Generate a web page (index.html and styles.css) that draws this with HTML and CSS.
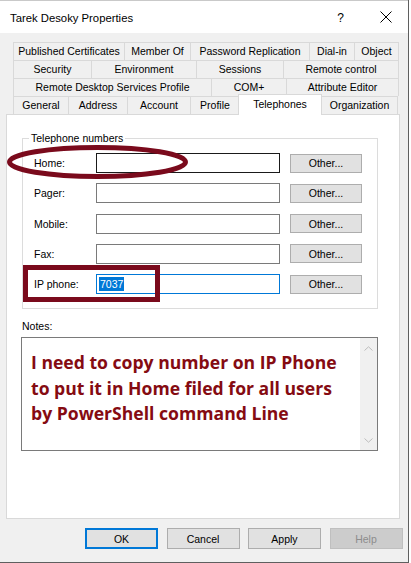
FILE: index.html
```html
<!DOCTYPE html>
<html>
<head>
<meta charset="utf-8">
<title>Tarek Desoky Properties</title>
<link rel="stylesheet" href="styles.css">
</head>
<body>
<div class="window">
  <div class="titlebar">
    <span class="title">Tarek Desoky Properties</span>
    <span class="help">?</span>
    <svg class="close" width="12" height="12" viewBox="0 0 12 12"><path d="M0.5 0.5L11.5 11.5M11.5 0.5L0.5 11.5" stroke="#000" stroke-width="1"/></svg>
  </div>

  <div class="tabs">
    <div class="tabrow">
      <div class="tab w112">Published Certificates</div>
      <div class="tab w67">Member Of</div>
      <div class="tab w120">Password Replication</div>
      <div class="tab w46">Dial-in</div>
      <div class="tab w45">Object</div>
    </div>
    <div class="tabrow">
      <div class="tab w79">Security</div>
      <div class="tab w106">Environment</div>
      <div class="tab w88">Sessions</div>
      <div class="tab w116">Remote control</div>
    </div>
    <div class="tabrow">
      <div class="tab w199">Remote Desktop Services Profile</div>
      <div class="tab w76">COM+</div>
      <div class="tab w113">Attribute Editor</div>
    </div>
    <div class="tabrow">
      <div class="tab w56">General</div>
      <div class="tab w60">Address</div>
      <div class="tab w64">Account</div>
      <div class="tab w50">Profile</div>
      <div class="tab selected w83">Telephones</div>
      <div class="tab w77">Organization</div>
    </div>
  </div>

  <div class="panel">
    <fieldset class="group">
      <legend>Telephone numbers</legend>
      <div class="rows">
        <div class="row">
          <span class="lbl">Home:</span>
          <span class="field dark"></span>
          <span class="btn other">Other...</span>
        </div>
        <div class="row">
          <span class="lbl">Pager:</span>
          <span class="field"></span>
          <span class="btn other">Other...</span>
        </div>
        <div class="row">
          <span class="lbl">Mobile:</span>
          <span class="field"></span>
          <span class="btn other">Other...</span>
        </div>
        <div class="row">
          <span class="lbl">Fax:</span>
          <span class="field"></span>
          <span class="btn other">Other...</span>
        </div>
        <div class="row">
          <span class="lbl">IP phone:</span>
          <span class="field focus"><span class="sel">7037</span></span>
          <span class="btn other">Other...</span>
        </div>
      </div>
    </fieldset>

    <div class="notes-label">Notes:</div>
    <div class="notes">
      <div class="notes-text">I need to copy number on IP Phone<br>to put it in Home filed for all users<br>by PowerShell command Line</div>
      <div class="scrollbar">
        <svg width="9" height="5" viewBox="0 0 9 5"><path d="M0.5 4.5L4.5 0.8L8.5 4.5" fill="none" stroke="#bdbdbd" stroke-width="1"/></svg>
        <svg width="9" height="5" viewBox="0 0 9 5"><path d="M0.5 0.5L4.5 4.2L8.5 0.5" fill="none" stroke="#bdbdbd" stroke-width="1"/></svg>
      </div>
    </div>
  </div>

  <div class="buttons">
    <span class="btn dlg default">OK</span>
    <span class="btn dlg">Cancel</span>
    <span class="btn dlg">Apply</span>
    <span class="btn dlg disabled">Help</span>
  </div>

  <svg class="marks" width="408" height="562" viewBox="0 0 408 562">
    <ellipse cx="97.5" cy="162" rx="88" ry="14.5" fill="none" stroke="#7a0a1c" stroke-width="5"/>
    <rect x="25.5" y="267.5" width="132" height="32" fill="none" stroke="#7a0a1c" stroke-width="5"/>
  </svg>
</div>
</body>
</html>
```

FILE: styles.css
```css
html, body {
  margin: 0;
  padding: 0;
  background: #ffffff;
}

body {
  font-family: "Liberation Sans", Arial, sans-serif;
  font-size: 10.5px;
  color: #000;
}

.window {
  position: relative;
  width: 408px;
  height: 562px;
  background: #f0f0f0;
  border-right: 1px solid #5f5f5f;
  border-bottom: 1px solid #5f5f5f;
  display: flex;
  flex-direction: column;
}

.titlebar {
  height: 33px;
  flex: none;
  background: #ffffff;
  border-top: 1px solid #c9c9c9;
  box-sizing: border-box;
  display: flex;
  align-items: center;
  padding-left: 10px;
}

.title {
  font-size: 11.3px;
  flex: 1;
  padding-top: 1px;
}

.help {
  font-size: 12px;
  margin-right: 36px;
  padding-top: 1px;
}

.close {
  margin-right: 16px;
}

.tabs {
  margin-top: 9px;
  padding-left: 13px;
  flex: none;
}

.tabrow {
  display: flex;
  height: 18px;
}

.tab {
  box-sizing: border-box;
  height: 18px;
  border: 1px solid #d9d9d9;
  border-bottom: none;
  margin-right: -1px;
  text-align: center;
  line-height: 17px;
  background: #f0f0f0;
  white-space: nowrap;
}

.tab.selected {
  position: relative;
  z-index: 2;
  background: #ffffff;
  height: 21px;
  margin-top: -2px;
  line-height: 18px;
  margin-left: -1px;
}

.w112 { width: 112px; }
.w67 { width: 67px; }
.w120 { width: 120px; }
.w46 { width: 46px; }
.w45 { width: 45px; }
.w79 { width: 79px; }
.w106 { width: 106px; }
.w88 { width: 88px; }
.w116 { width: 116px; }
.w199 { width: 199px; }
.w76 { width: 76px; }
.w113 { width: 113px; }
.w56 { width: 56px; }
.w60 { width: 60px; }
.w64 { width: 64px; }
.w50 { width: 50px; }
.w83 { width: 84px; }
.w77 { width: 77px; }

.panel {
  flex: none;
  box-sizing: border-box;
  height: 405px;
  margin: 0 8px 0 6px;
  background: #ffffff;
  border: 1px solid #d9d9d9;
  position: relative;
  z-index: 1;
}

.group {
  margin: 17px 0 0 15px;
  width: 356px;
  box-sizing: border-box;
  border: 1px solid #dcdcdc;
  padding: 0;
}

.group legend {
  margin-left: 6px;
  padding: 0 2px;
  line-height: 13px;
}

.rows {
  display: flex;
  flex-direction: column;
  gap: 10.25px;
  padding: 8px 0 14px 11px;
}

.row {
  display: flex;
  align-items: center;
  height: 20px;
}

.lbl {
  width: 62px;
}

.field {
  box-sizing: border-box;
  width: 184px;
  height: 20px;
  border: 1px solid #7a7a7a;
  background: #fff;
  display: flex;
  align-items: center;
  padding-left: 2px;
}

.field.dark {
  border-color: #1a1a1a;
}

.field.focus {
  border-color: #0078d7;
}

.sel {
  background: #0078d7;
  color: #ffffff;
  line-height: 14px;
  padding: 0 1px;
}

.btn {
  box-sizing: border-box;
  display: flex;
  align-items: center;
  justify-content: center;
  background: #e1e1e1;
  border: 1px solid #adadad;
}

.other {
  width: 72px;
  height: 19px;
  margin-left: 10px;
}

.notes-label {
  margin: 11px 0 0 15px;
  line-height: 13px;
}

.notes {
  margin: 4px 0 0 14px;
  width: 357px;
  height: 114px;
  box-sizing: border-box;
  border: 1px solid #7a7a7a;
  display: flex;
}

.notes-text {
  flex: 1;
  padding: 12px 0 0 9px;
  font-family: "Open Sans", Lato, sans-serif;
  font-weight: 700;
  font-size: 17.6px;
  line-height: 25.5px;
  color: #850b12;
}

.scrollbar {
  width: 17px;
  background: #f0f0f0;
  display: flex;
  flex-direction: column;
  align-items: center;
  justify-content: space-between;
  padding: 8px 0 7px;
  box-sizing: border-box;
}

.buttons {
  flex: none;
  display: flex;
  justify-content: flex-end;
  gap: 8.5px;
  margin-top: 9px;
  padding-right: 5.5px;
}

.dlg {
  width: 73px;
  height: 21px;
}

.default {
  border: 2px solid #0078d7;
}

.disabled {
  background: #cccccc;
  border-color: #bfbfbf;
  color: #8d8d8d;
}

.marks {
  position: absolute;
  top: 0;
  left: 0;
  z-index: 5;
  pointer-events: none;
}
```
